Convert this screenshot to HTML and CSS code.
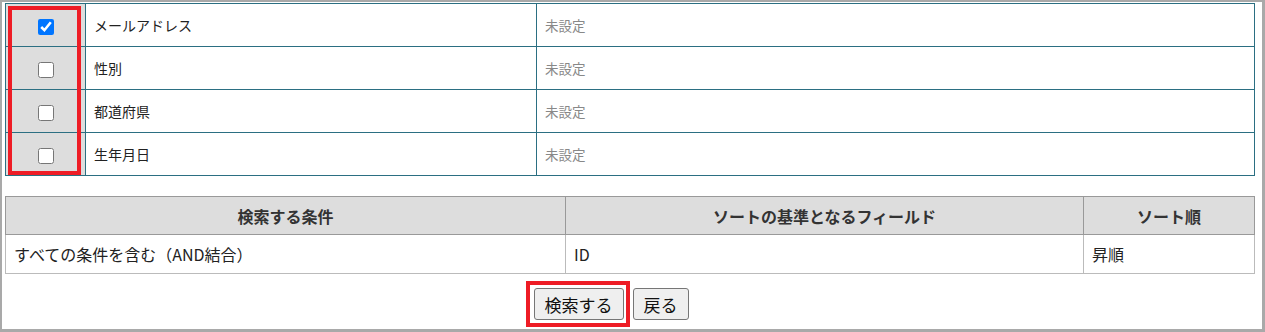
FILE: index.html
```html
<!DOCTYPE html>
<html lang="ja">
<head>
  <meta charset="UTF-8">
  <title>検索条件</title>
  <link rel="stylesheet" href="styles.css">
</head>
<body>

  <div class="frame">
    <table class="field-table">
      <colgroup>
        <col class="col-check">
        <col class="col-name">
        <col>
      </colgroup>
      <tr>
        <td class="check-cell"><input type="checkbox" checked></td>
        <td class="field-name">メールアドレス</td>
        <td class="field-value">未設定</td>
      </tr>
      <tr>
        <td class="check-cell"><input type="checkbox"></td>
        <td class="field-name">性別</td>
        <td class="field-value">未設定</td>
      </tr>
      <tr>
        <td class="check-cell"><input type="checkbox"></td>
        <td class="field-name">都道府県</td>
        <td class="field-value">未設定</td>
      </tr>
      <tr>
        <td class="check-cell"><input type="checkbox"></td>
        <td class="field-name">生年月日</td>
        <td class="field-value">未設定</td>
      </tr>
    </table>

    <table class="cond-table">
      <colgroup>
        <col class="col-cond">
        <col class="col-sort">
        <col>
      </colgroup>
      <tr>
        <th>検索する条件</th>
        <th>ソートの基準となるフィールド</th>
        <th>ソート順</th>
      </tr>
      <tr>
        <td>すべての条件を含む（AND結合）</td>
        <td>ID</td>
        <td>昇順</td>
      </tr>
    </table>

    <div class="actions">
      <span class="marked">
        <button type="button">検索する</button>
      </span>
      <button type="button">戻る</button>
    </div>

    <div class="mark mark-checks"></div>
  </div>

</body>
</html>
```

FILE: styles.css
```css
* {
  margin: 0;
  padding: 0;
  box-sizing: border-box;
}

body {
  font-family: "Noto Sans CJK JP", "Noto Sans", sans-serif;
  background-color: #fff;
  color: #222;
}

.frame {
  position: relative;
  width: 1265px;
  height: 332px;
  border: solid #a9a9a9;
  border-width: 2px 3px 3px 2px;
  padding: 1px 7px 0 3px;
}

/* checkbox table */
.field-table {
  width: 1250px;
  border-collapse: collapse;
  table-layout: fixed;
  border: 1px solid #2b6f82;
  font-size: 14px;
}

.field-table td {
  height: 43px;
  border: 1px solid #2b6f82;
  padding: 0 8px;
}

.col-check {
  width: 80px;
}

.col-name {
  width: 451px;
}

.check-cell {
  background-color: #ddd;
  text-align: center;
}

.check-cell input {
  width: 16px;
  height: 16px;
  vertical-align: middle;
  accent-color: #0075ff;
}

.field-value {
  color: #888;
  font-size: 13.5px;
}

/* condition table */
.cond-table {
  width: 1250px;
  margin-top: 20px;
  border-collapse: collapse;
  table-layout: fixed;
  border: 1px solid #bbb;
  font-size: 16px;
}

.col-cond {
  width: 560px;
}

.col-sort {
  width: 518px;
}

.cond-table th {
  height: 38px;
  background-color: #ddd;
  border: 1px solid #999;
  color: #333;
  font-size: 16px;
}

.cond-table td {
  height: 39px;
  border: 1px solid #bbb;
  padding: 0 8px;
}

.actions {
  display: flex;
  justify-content: center;
  align-items: center;
  gap: 9px;
  margin-top: 14px;
  padding-right: 38px;
}

.actions button {
  height: 32px;
  padding: 0 10px;
  font-family: inherit;
  font-size: 17px;
  color: #111;
  background-color: #efefef;
  border: 1px solid #767676;
  border-radius: 3px;
}

.marked {
  position: relative;
  display: flex;
}

.marked::after {
  content: "";
  position: absolute;
  left: -8px;
  top: -7px;
  right: -6px;
  bottom: -7px;
  border: 4px solid #ee1c25;
}

.mark {
  position: absolute;
  border: 4px solid #ee1c25;
}

.mark-checks {
  left: 6px;
  top: 4px;
  width: 73px;
  height: 169px;
}
```
